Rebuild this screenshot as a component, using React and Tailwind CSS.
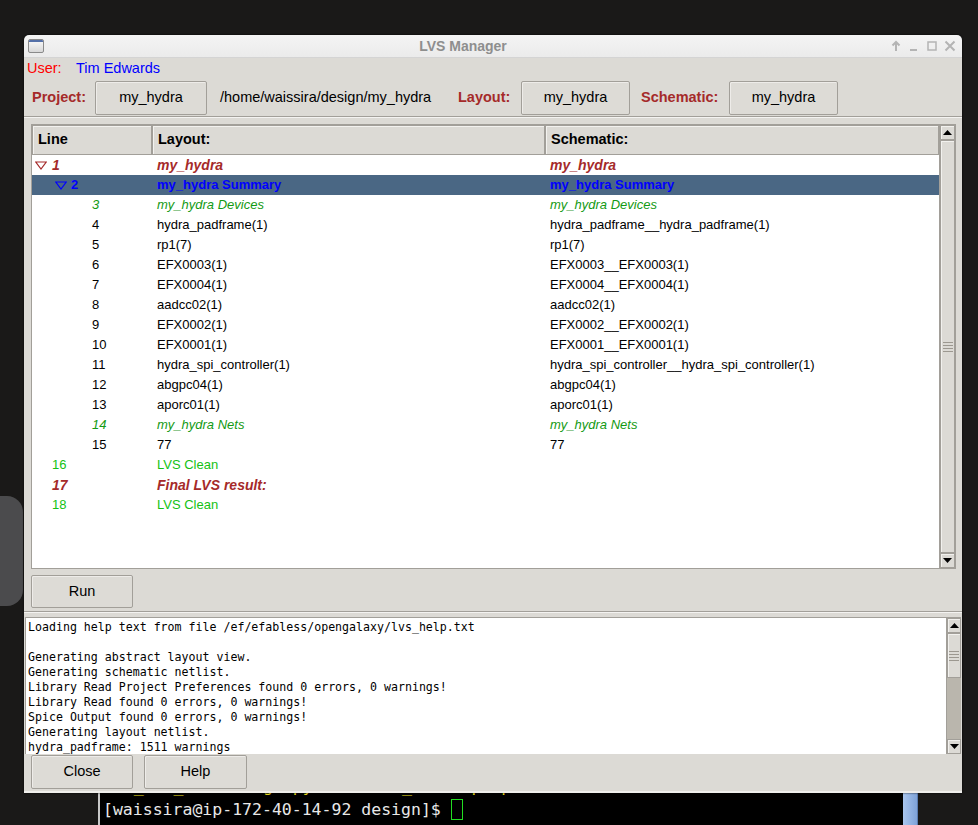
import React from "react";

const SANS = { fontFamily: '"Liberation Sans", Arial, sans-serif' };
const MONO = { fontFamily: '"DejaVu Sans Mono", monospace' };

const rows = [
  { n: "1", k: "top", l: "my_hydra", s: "my_hydra" },
  { n: "2", k: "sel", l: "my_hydra Summary", s: "my_hydra Summary" },
  { n: "3", k: "grn", l: "my_hydra Devices", s: "my_hydra Devices" },
  { n: "4", k: "norm", l: "hydra_padframe(1)", s: "hydra_padframe__hydra_padframe(1)" },
  { n: "5", k: "norm", l: "rp1(7)", s: "rp1(7)" },
  { n: "6", k: "norm", l: "EFX0003(1)", s: "EFX0003__EFX0003(1)" },
  { n: "7", k: "norm", l: "EFX0004(1)", s: "EFX0004__EFX0004(1)" },
  { n: "8", k: "norm", l: "aadcc02(1)", s: "aadcc02(1)" },
  { n: "9", k: "norm", l: "EFX0002(1)", s: "EFX0002__EFX0002(1)" },
  { n: "10", k: "norm", l: "EFX0001(1)", s: "EFX0001__EFX0001(1)" },
  { n: "11", k: "norm", l: "hydra_spi_controller(1)", s: "hydra_spi_controller__hydra_spi_controller(1)" },
  { n: "12", k: "norm", l: "abgpc04(1)", s: "abgpc04(1)" },
  { n: "13", k: "norm", l: "aporc01(1)", s: "aporc01(1)" },
  { n: "14", k: "grn", l: "my_hydra Nets", s: "my_hydra Nets" },
  { n: "15", k: "norm", l: "77", s: "77" },
  { n: "16", k: "clean", l: "LVS Clean", s: "" },
  { n: "17", k: "res", l: "Final LVS result:", s: "" },
  { n: "18", k: "clean", l: "LVS Clean", s: "" },
];

const consoleLines = [
  "Loading help text from file /ef/efabless/opengalaxy/lvs_help.txt",
  "",
  "Generating abstract layout view.",
  "Generating schematic netlist.",
  "Library Read Project Preferences found 0 errors, 0 warnings!",
  "Library Read found 0 errors, 0 warnings!",
  "Spice Output found 0 errors, 0 warnings!",
  "Generating layout netlist.",
  "hydra_padframe: 1511 warnings",
];

function Tri({ color }) {
  return (
    <svg width="12" height="9" viewBox="0 0 12 9" className="shrink-0">
      <polygon points="0.8,1 11.2,1 6,8" fill="none" stroke={color} strokeWidth="1.2" />
    </svg>
  );
}

function Btn({ children, w, h = "h-[34px]" }) {
  return (
    <div
      className={`${w} ${h} flex items-center justify-center rounded-[2px] border border-[#a29f99] bg-[#dddbd6] shadow-[inset_1px_1px_0_#eeece9] text-[14.5px] text-black`}
    >
      {children}
    </div>
  );
}

function ArrowBtn({ up }) {
  return (
    <div className="h-[15px] w-full flex items-center justify-center border border-[#a29f99] bg-[#dcdad5] shadow-[inset_1px_1px_0_#f2f1ee]">
      <svg width="9" height="5" viewBox="0 0 9 5">
        {up ? <polygon points="0,5 9,5 4.5,0" fill="#000" /> : <polygon points="0,0 9,0 4.5,5" fill="#000" />}
      </svg>
    </div>
  );
}

function Grip() {
  return (
    <div className="flex flex-col gap-[2px] w-[10px]">
      <div className="h-px bg-[#9c9890]" />
      <div className="h-px bg-[#9c9890]" />
      <div className="h-px bg-[#9c9890]" />
      <div className="h-px bg-[#9c9890]" />
    </div>
  );
}

function LineCell({ r }) {
  if (r.k === "top")
    return (
      <div className="flex items-center pl-[3px] gap-[5px] text-[#a52a2a] font-bold italic text-[14px]">
        <Tri color="#a52a2a" />
        <span>{r.n}</span>
      </div>
    );
  if (r.k === "sel")
    return (
      <div className="flex items-center pl-[23px] gap-[4px] text-[#0000ff] font-bold text-[13px]">
        <Tri color="#0000ff" />
        <span>{r.n}</span>
      </div>
    );
  if (r.k === "grn") return <div className="pl-[60px] italic text-[#139a13] text-[13px]">{r.n}</div>;
  if (r.k === "norm") return <div className="pl-[60px] text-black text-[13px]">{r.n}</div>;
  if (r.k === "clean") return <div className="pl-[20px] text-[#14c214] text-[13px]">{r.n}</div>;
  return <div className="pl-[20px] font-bold italic text-[#a52a2a] text-[14px]">{r.n}</div>;
}

function txtCls(k) {
  if (k === "top" || k === "res") return "font-bold italic text-[#a52a2a] text-[14px]";
  if (k === "sel") return "font-bold text-[#0000ff] text-[13px]";
  if (k === "grn") return "italic text-[#139a13] text-[13px]";
  if (k === "clean") return "text-[#14c214] text-[13px]";
  return "text-black text-[13px]";
}

function Row({ r }) {
  return (
    <div
      className={`grid grid-cols-[120px_393px_394px] h-[20px] items-center whitespace-nowrap ${
        r.k === "sel" ? "bg-[#4a6784]" : ""
      }`}
    >
      <LineCell r={r} />
      <div className={`pl-[5px] ${txtCls(r.k)}`}>{r.l}</div>
      <div className={`pl-[5px] ${txtCls(r.k)}`}>{r.s}</div>
    </div>
  );
}

function HeadCell({ children, w }) {
  return (
    <div
      className={`${w} h-[30px] flex items-center pl-[5px] border border-[#a29f99] bg-[#dcdad5] shadow-[inset_1px_1px_0_#f3f2ef] font-bold text-[14.5px] text-black`}
    >
      {children}
    </div>
  );
}

export default function App() {
  return (
    <div className="relative w-[978px] h-[825px] overflow-hidden bg-[#1a1918]" style={SANS}>
      {/* desktop blob */}
      <div className="absolute left-[-30px] top-[496px] w-[53px] h-[110px] rounded-[16px] bg-[#4b4b4d]" />

      {/* terminal behind (only its visible strip) */}
      <div className="absolute left-[98px] top-[793px] w-[820px] h-[32px] flex overflow-hidden">
        <div className="w-[2px] bg-[#c8c8c8]" />
        <div className="relative flex-1 bg-black overflow-hidden">
          <div
            className="absolute left-[4px] top-[-16px] text-[16.5px] leading-[20px] text-[#f0e020] whitespace-nowrap"
            style={MONO}
          >
            hvs_lvs_out  managerpy  vermatch_test  ip    update
          </div>
          <div
            className="absolute left-[3px] top-[6px] flex items-center text-[16.5px] leading-[20px] text-[#e8e8e8] whitespace-nowrap"
            style={MONO}
          >
            <span>[waissira@ip-172-40-14-92 design]$</span>
            <span className="ml-[10px] w-[12px] h-[21px] border border-[#22dd22]" />
          </div>
        </div>
        <div className="w-[15px] bg-gradient-to-r from-[#a9c6ee] to-[#7fa2d8] border-r border-[#5a7cb0]" />
      </div>

      {/* LVS Manager window */}
      <div className="absolute left-[24px] top-[35px] w-[938px] h-[758px] flex flex-col rounded-t-[5px] shadow-[0_0_2px_#000]">
        {/* title bar */}
        <div className="h-[23px] flex items-center rounded-t-[5px] bg-gradient-to-b from-[#f4f4f4] to-[#ebebeb] border-b border-[#d4d4d4]">
          <div className="w-[20px] pl-[4px] flex items-center">
            <div className="w-[16px] h-[14px] rounded-[2px] border border-[#8a8a8a] bg-gradient-to-b from-[#fafafa] to-[#d8d8d8] overflow-hidden">
              <div className="h-[2px] bg-[#5470a8]" />
            </div>
          </div>
          <div className="flex-1 text-center font-bold text-[14px] text-[#8e8e8e]">LVS Manager</div>
          <div className="w-[80px] flex items-center gap-[6px] pl-[8px]">
            <svg width="12" height="12" viewBox="0 0 12 12">
              <path d="M6 11V2M2.5 5.5L6 2l3.5 3.5" fill="none" stroke="#b4b4b4" strokeWidth="2" />
            </svg>
            <svg width="12" height="12" viewBox="0 0 12 12">
              <path d="M2 10h7" stroke="#b4b4b4" strokeWidth="2" />
            </svg>
            <svg width="12" height="12" viewBox="0 0 12 12">
              <rect x="2" y="2" width="8" height="8" fill="none" stroke="#b4b4b4" strokeWidth="1.5" />
            </svg>
            <svg width="12" height="12" viewBox="0 0 12 12">
              <path d="M1.5 1.5l9 9M10.5 1.5l-9 9" stroke="#b4b4b4" strokeWidth="2" />
            </svg>
          </div>
        </div>

        {/* body */}
        <div className="flex-1 flex flex-col bg-[#dcdad5]">
          <div className="h-[22px] flex items-center pl-[3px] text-[14.5px]">
            <span className="w-[49px] text-[#ff0000]">User:</span>
            <span className="text-[#0000ff]">Tim Edwards</span>
          </div>

          <div className="mt-[1px] h-[34px] flex items-center pl-[8px] text-[14.5px] whitespace-nowrap">
            <span className="w-[63px] font-bold text-[#a52a2a]">Project:</span>
            <Btn w="w-[112px]">my_hydra</Btn>
            <span className="w-[251px] pl-[13px] text-black">/home/waissira/design/my_hydra</span>
            <span className="w-[63px] font-bold text-[#a52a2a]">Layout:</span>
            <Btn w="w-[109px]">my_hydra</Btn>
            <span className="w-[99px] pl-[11px] font-bold text-[#a52a2a]">Schematic:</span>
            <Btn w="w-[109px]">my_hydra</Btn>
          </div>

          <div className="mt-[1px] h-[2px] border-t border-[#a29f99] border-b border-b-[#f4f3f1]" />

          {/* table */}
          <div className="mt-[6px] ml-[7px] w-[925px] h-[445px] flex border border-[#a29f99] bg-white">
            <div className="w-[907px] flex flex-col">
              <div className="flex">
                <HeadCell w="w-[120px]">Line</HeadCell>
                <HeadCell w="w-[393px]">Layout:</HeadCell>
                <HeadCell w="w-[394px]">Schematic:</HeadCell>
              </div>
              {rows.map((r) => (
                <Row key={r.n} r={r} />
              ))}
            </div>
            <div className="w-[16px] flex flex-col bg-[#dcdad5] border-l border-[#a29f99]">
              <ArrowBtn up />
              <div className="flex-1 flex items-center justify-center border border-[#a29f99] bg-[#dcdad5] shadow-[inset_1px_1px_0_#f2f1ee]">
                <Grip />
              </div>
              <ArrowBtn />
            </div>
          </div>

          <div className="mt-[6px] ml-[7px]">
            <Btn w="w-[102px]" h="h-[33px]">Run</Btn>
          </div>

          <div className="mt-[3px] h-[2px] border-t border-[#a29f99] border-b border-b-[#f4f3f1]" />

          {/* console */}
          <div className="mt-[4px] ml-[1px] w-[936px] h-[137px] flex border-t border-l border-[#a29f99]">
            <div className="flex-1 bg-white overflow-hidden pt-[2px] pl-[2px]" style={MONO}>
              {consoleLines.map((t, i) => (
                <div key={i} className="h-[15px] leading-[15px] text-[11.6px] text-black whitespace-pre">
                  {t}
                </div>
              ))}
            </div>
            <div className="w-[15px] flex flex-col bg-[#bab6ad] border-l border-[#a29f99]">
              <ArrowBtn up />
              <div className="h-[45px] flex items-center justify-center border border-[#a29f99] bg-[#dcdad5] shadow-[inset_1px_1px_0_#f2f1ee]">
                <Grip />
              </div>
              <div className="flex-1" />
              <ArrowBtn />
            </div>
          </div>

          <div className="mt-[1px] ml-[7px] flex gap-[11px]">
            <Btn w="w-[102px]">Close</Btn>
            <Btn w="w-[103px]">Help</Btn>
          </div>
          <div className="flex-1" />
          <div className="h-[2px] bg-[#efeeeb]" />
        </div>
      </div>
    </div>
  );
}
